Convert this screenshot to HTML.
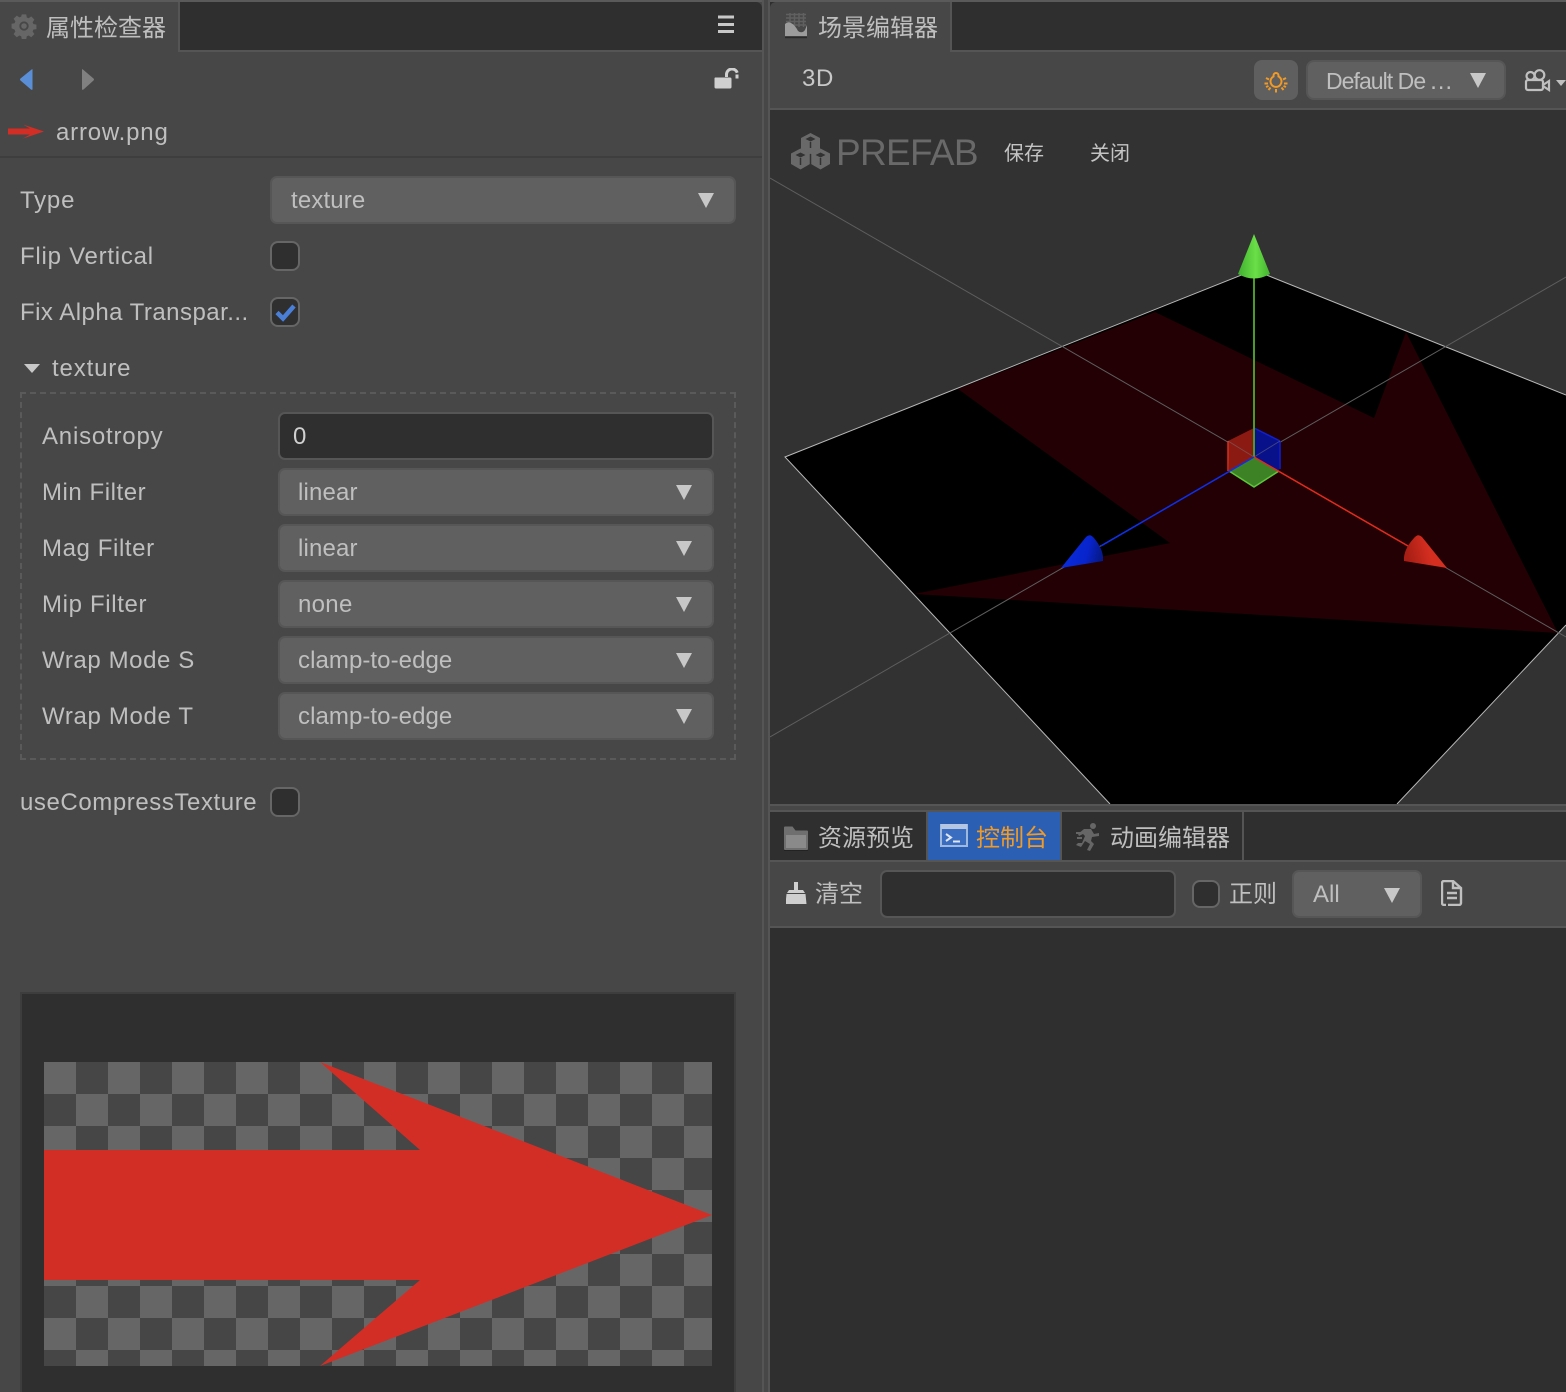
<!DOCTYPE html>
<html lang="zh">
<head>
<meta charset="utf-8">
<title>属性检查器</title>
<style>
html,body{margin:0;padding:0;background:#2f2f2f}
body{position:relative;width:1566px;height:1392px;overflow:hidden;font-family:"Liberation Sans","Noto Sans CJK SC",sans-serif;font-size:24px;color:#bfbfbf}
.r{position:absolute;box-sizing:border-box}
.t{position:absolute;white-space:nowrap;line-height:32px;height:32px;margin-top:1px}
.sel{position:absolute;box-sizing:border-box;background:#606060;border:2px solid #565656;border-radius:7px}
.inp{position:absolute;box-sizing:border-box;background:#2f2f2f;border:2px solid #565656;border-radius:7px}
.cb{position:absolute;box-sizing:border-box;width:30px;height:30px;background:#2f2f2f;border:2px solid #666;border-radius:8px}
.tri{position:absolute;width:0;height:0;border-left:8px solid transparent;border-right:8px solid transparent;border-top:15px solid #c8c8c8}
svg{position:absolute;overflow:hidden}
</style>
</head>
<body>
<!-- left panel -->
<div class="r" style="left:0;top:0;width:764px;height:1392px;background:#474747"></div>
<div class="r" style="left:0;top:0;width:1566px;height:2px;background:#5a5a5a"></div>
<div class="r" style="left:180px;top:2px;width:582px;height:48px;background:#2f2f2f;border-top-right-radius:6px"></div>
<div class="r" style="left:178px;top:2px;width:2px;height:50px;background:#555"></div>
<div class="r" style="left:178px;top:50px;width:584px;height:2px;background:#555"></div>
<div class="r" style="left:762px;top:0;width:2px;height:1392px;background:#555"></div>
<div class="r" style="left:764px;top:0;width:4px;height:1392px;background:#474747"></div>
<div class="r" style="left:0;top:156px;width:762px;height:2px;background:#3e3e3e"></div>

<svg style="left:11px;top:13px" width="26" height="26" viewBox="-1 -1 28 28"><path fill="#666" fill-rule="evenodd" d="M10.6 0.500h4.800l.6 3.300 2 .8 2.800-1.900 3.400 3.400-1.900 2.800.8 2 3.300.6v4.800l-3.300.6-.8 2 1.900 2.800-3.400 3.400-2.800-1.900-2 .8-.6 3.300h-4.800l-.6-3.300-2-.8-2.800 1.900-3.400-3.400 1.900-2.800-.8-2L-.4 15.400v-4.800l3.300-.6.8-2L1.800 5.200l3.400-3.400L8 3.700l2-.8zM13 8a5 5 0 1 0 0 10 5 5 0 0 0 0-10z"/><circle cx="13" cy="13" r="3" fill="#666"/></svg>
<div class="t" style="left:46px;top:12px">属性检查器</div>
<svg style="left:714px;top:14px" width="24" height="22"><path d="M4 3h16M4 10.500h16M4 17.500h16" stroke="#c8c8c8" stroke-width="3"/></svg>

<svg style="left:18px;top:68px" width="18" height="24"><path d="M14.500 1.500v19.500q0 1.500-1.500.5L2.500 12.500q-1-1 0-2L13 2q1.500-1.500 1.500-.5z" fill="#5a8fd8"/></svg>
<svg style="left:80px;top:68px" width="18" height="24"><path d="M2 1.500v19.500q0 1.500 1.500.5L13.500 12.500q1-1 0-2L3.500 2Q2 .5 2 1.500z" fill="#808080"/></svg>
<svg style="left:714px;top:68px" width="26" height="22"><path d="M1 9.500h15a1.500 1.500 0 0 1 1.500 1.500v8a1.500 1.500 0 0 1-1.500 1.500H2a1.500 1.500 0 0 1-1.500-1.500v-8A1.500 1.500 0 0 1 1 9.500z" fill="#cfcfcf"/><path d="M12.500 9V6.500a5.500 5.500 0 0 1 10.700-1.800" fill="none" stroke="#cfcfcf" stroke-width="3"/><path d="M21.500 6.500h3v4h-3z" fill="#cfcfcf"/></svg>

<svg style="left:8px;top:124px" width="36" height="16"><path d="M0 4.500h22L15 .5 36 7.500 15 14.500 22 10.500H0z" fill="#d32e26"/></svg>
<div class="t" style="left:56px;top:116px;letter-spacing:.8px">arrow.png</div>

<div class="t" style="left:20px;top:184px;letter-spacing:.8px">Type</div>
<div class="sel" style="left:270px;top:176px;width:466px;height:48px"></div>
<div class="t" style="left:291px;top:184px;letter-spacing:.15px">texture</div>
<div class="tri" style="left:698px;top:193px"></div>

<div class="t" style="left:20px;top:240px;letter-spacing:.75px">Flip Vertical</div>
<div class="cb" style="left:270px;top:241px"></div>
<div class="t" style="left:20px;top:296px;letter-spacing:.47px">Fix Alpha Transpar...</div>
<div class="cb" style="left:270px;top:297px"></div>
<svg style="left:270px;top:297px" width="30" height="30"><path d="M7 15.500l6 6L24 9" fill="none" stroke="#4a7fd8" stroke-width="4.500"/></svg>

<div class="tri" style="left:24px;top:364px;border-left-width:8px;border-right-width:8px;border-top-width:9px"></div>
<div class="t" style="left:52px;top:352px;letter-spacing:.85px">texture</div>

<div class="r" style="left:20px;top:392px;width:716px;height:368px;border:2px dashed #5a5a5a"></div>
<div class="t" style="left:42px;top:420px;letter-spacing:.8px">Anisotropy</div>
<div class="inp" style="left:278px;top:412px;width:436px;height:48px"></div>
<div class="t" style="left:293px;top:420px;color:#d0d0d0">0</div>

<div class="t" style="left:42px;top:476px;letter-spacing:.55px">Min Filter</div>
<div class="sel" style="left:278px;top:468px;width:436px;height:48px"></div>
<div class="t" style="left:298px;top:476px;letter-spacing:.15px">linear</div>
<div class="tri" style="left:676px;top:485px"></div>

<div class="t" style="left:42px;top:532px;letter-spacing:.6px">Mag Filter</div>
<div class="sel" style="left:278px;top:524px;width:436px;height:48px"></div>
<div class="t" style="left:298px;top:532px;letter-spacing:.15px">linear</div>
<div class="tri" style="left:676px;top:541px"></div>

<div class="t" style="left:42px;top:588px;letter-spacing:.65px">Mip Filter</div>
<div class="sel" style="left:278px;top:580px;width:436px;height:48px"></div>
<div class="t" style="left:298px;top:588px;letter-spacing:.3px">none</div>
<div class="tri" style="left:676px;top:597px"></div>

<div class="t" style="left:42px;top:644px;letter-spacing:.6px">Wrap Mode S</div>
<div class="sel" style="left:278px;top:636px;width:436px;height:48px"></div>
<div class="t" style="left:298px;top:644px;letter-spacing:.07px">clamp-to-edge</div>
<div class="tri" style="left:676px;top:653px"></div>

<div class="t" style="left:42px;top:700px;letter-spacing:.65px">Wrap Mode T</div>
<div class="sel" style="left:278px;top:692px;width:436px;height:48px"></div>
<div class="t" style="left:298px;top:700px;letter-spacing:.07px">clamp-to-edge</div>
<div class="tri" style="left:676px;top:709px"></div>

<div class="t" style="left:20px;top:786px;letter-spacing:.58px">useCompressTexture</div>
<div class="cb" style="left:270px;top:787px"></div>

<!-- preview -->
<div class="r" style="left:20px;top:992px;width:716px;height:400px;background:#2f2f2f;border:2px solid #3d3d3d;border-bottom:0"></div>
<div class="r" style="left:44px;top:1062px;width:668px;height:304px;background:conic-gradient(#464646 25%,#666 0 50%,#464646 0 75%,#666 0) 0 0/64px 64px"></div>
<svg style="left:0;top:0" width="764" height="1392"><polygon points="44,1150 420,1150 320,1062 712,1215 320,1366 420,1280 44,1280" fill="#d32e26"/></svg>

<!-- right panel -->
<div class="r" style="left:768px;top:0;width:2px;height:1392px;background:#555"></div>
<div class="r" style="left:770px;top:2px;width:180px;height:50px;background:#474747;border-top-left-radius:6px"></div>
<div class="r" style="left:950px;top:2px;width:2px;height:50px;background:#555"></div>
<div class="r" style="left:952px;top:50px;width:614px;height:2px;background:#555"></div>
<div class="r" style="left:770px;top:52px;width:796px;height:56px;background:#474747"></div>
<div class="r" style="left:770px;top:108px;width:796px;height:2px;background:#555"></div>

<svg style="left:785px;top:13px" width="22" height="26"><path d="M1 1.500h20M1 5h20M1 8.500h20M1 12h20" stroke="#606060" stroke-width="1.500"/><path d="M5 0v14M9.500 0v14M14 0v14M18.500 0v14" stroke="#606060" stroke-width="1.500"/><path d="M0 23V11Q3 8 6 10Q10 12 13 18Q17 21 20 17L22 12V23Z" fill="#9c9c9c"/><path d="M0 24.500h22" stroke="#2a2a2a" stroke-width="1.500"/></svg>
<div class="t" style="left:818px;top:12px">场景编辑器</div>
<div class="t" style="left:802px;top:62px;color:#c8c8c8;letter-spacing:.6px">3D</div>

<div class="r" style="left:1254px;top:60px;width:44px;height:40px;background:#5f5f5f;border-radius:8px"></div>
<svg style="left:1264px;top:70px" width="24" height="24" viewBox="0 0 24 24"><path d="M12 3a2.500 2.500 0 0 1 2.500 2.500 v1 a5.500 5.500 0 1 1-5 0v-1A2.500 2.500 0 0 1 12 3z" fill="none" stroke="#f09a27" stroke-width="2"/><path d="M12 19v3.500M6.500 17.500l-2 2.500M17.500 17.500l2 2.500M4 13.500H.5M20 13.500h3.500M5 9.500L2 8M19 9.500L22 8M4.500 16L2 17M19.500 16L22 17" stroke="#f09a27" stroke-width="2"/></svg>
<div class="sel" style="left:1306px;top:60px;width:200px;height:40px;border-radius:8px"></div>
<div class="t" style="left:1326px;top:64px;font-size:23px;letter-spacing:-.95px">Default De<span style="font-size:24px;letter-spacing:0;margin-left:4px">…</span></div>
<div class="tri" style="left:1470px;top:73px"></div>
<svg style="left:1524px;top:69px" width="42" height="24"><circle cx="6.500" cy="7" r="4" fill="none" stroke="#c0c0c0" stroke-width="2.200"/><circle cx="15.500" cy="6" r="4.800" fill="none" stroke="#c0c0c0" stroke-width="2.200"/><rect x="2" y="11" width="17" height="10" rx="2" fill="#474747" stroke="#c0c0c0" stroke-width="2.200"/><path d="M19 16l6-4v9l-6-4z" fill="none" stroke="#c0c0c0" stroke-width="2.200"/><path d="M32 11h10l-5 6z" fill="#c0c0c0"/></svg>

<!-- scene -->
<svg style="left:770px;top:110px" width="796" height="694" viewBox="770 110 796 694">
<defs>
<linearGradient id="g" x1="0" x2="1" y1="0" y2="0"><stop offset="0" stop-color="#3fb02f"/><stop offset=".55" stop-color="#6adf47"/><stop offset="1" stop-color="#42b52f"/></linearGradient>
<linearGradient id="b" x1="0" x2="1" y1="0" y2=".2"><stop offset="0" stop-color="#0a2fe0"/><stop offset=".7" stop-color="#0824cc"/><stop offset="1" stop-color="#061a90"/></linearGradient>
<linearGradient id="re" x1="0" x2="1" y1=".2" y2="0"><stop offset="0" stop-color="#a81e14"/><stop offset=".5" stop-color="#d32e20"/><stop offset="1" stop-color="#d43020"/></linearGradient>
</defs>
<rect x="770" y="110" width="796" height="694" fill="#323232"/>
<polygon points="785,457 1254,270 1566,395 1566,625 1397,804 1110,804" fill="#000"/>
<path d="M1110 804L785 457L1254 270L1566 395M1566 625L1397 804" fill="none" stroke="#b8b8b8" stroke-width="1"/>
<polygon points="958,389 1155,312 1374,418 1406,332 1558,633 914,594 1170,543" fill="#220003"/>
<path d="M770 178L1566 637M770 737L1566 277" stroke="#5e5e5e" stroke-width="1"/>
<polygon points="1254,428 1228,441 1229,471 1254,457" fill="#8a1a12"/>
<polygon points="1254,428 1280,441 1279,471 1254,457" fill="#08108a"/>
<polygon points="1254,457 1229,471 1254,487 1279,471" fill="#3e8226"/>
<path d="M1228 441V471" stroke="#d8301f" stroke-width="1.500"/>
<path d="M1280 441V469M1280 441L1254 428" stroke="#1020d0" stroke-width="1.500"/>
<path d="M1229 471L1254 487L1279 471" fill="none" stroke="#5cc83a" stroke-width="1.500"/>
<path d="M1228 441L1254 457M1280 441L1254 457" stroke="#777" stroke-opacity=".5"/>
<path d="M1254 457V276" stroke="#4a9a2c" stroke-width="2"/>
<path d="M1254 457L1101 546" stroke="#0c2ff0" stroke-width="1.500"/>
<path d="M1254 457L1408 546" stroke="#e22a1c" stroke-width="1.500"/>
<path d="M1254 234L1270 274Q1254 283 1238 274Z" fill="url(#g)"/>
<path d="M1061 568L1086 537Q1090 533 1094 538Q1104 550 1103 561Z" fill="url(#b)"/>
<path d="M1447 568L1422 537Q1418 533 1414 538Q1403 550 1404 561Z" fill="url(#re)"/>
</svg>
<svg style="left:790px;top:132px" width="42" height="40" viewBox="0 0 42 40"><g fill="#696969" fill-rule="evenodd"><path d="M20.500 1l9.500 5v11l-9.500 5-9.500-5V6zM20.500 4.500l-5 2.500 5 2.500 5-2.500z"/><path d="M10.500 16.500L20 21.500V32L10.500 37.500 1 32V21.500zM10.500 20.500l-5 2.500 5 2.500 5-2.500z"/><path d="M30.500 16.500L40 21.500V32L30.500 37.500 21 32V21.500zM30.500 20.500l-5 2.500 5 2.500 5-2.500z"/></g><path d="M20.500 10v6M10.500 26v7M30.500 26v7M20.500 22v15" stroke="#323232" stroke-width="1.500"/></svg>
<div class="t" style="left:836px;top:136px;font-size:37px;letter-spacing:-.7px;color:#696969">PREFAB</div>
<div class="t" style="left:1004px;top:137px;font-size:20px;color:#c4c4c4">保存</div>
<div class="t" style="left:1090px;top:137px;font-size:20px;color:#c4c4c4">关闭</div>

<!-- bottom panel -->
<div class="r" style="left:770px;top:804px;width:796px;height:2px;background:#555"></div>
<div class="r" style="left:770px;top:806px;width:796px;height:4px;background:#474747"></div>
<div class="r" style="left:770px;top:810px;width:796px;height:2px;background:#555"></div>
<div class="r" style="left:770px;top:860px;width:796px;height:2px;background:#555"></div>
<div class="r" style="left:770px;top:862px;width:796px;height:64px;background:#474747"></div>
<div class="r" style="left:770px;top:926px;width:796px;height:2px;background:#555"></div>
<div class="r" style="left:926px;top:812px;width:2px;height:48px;background:#555"></div>
<div class="r" style="left:928px;top:812px;width:132px;height:48px;background:#2b5fb3"></div>
<div class="r" style="left:1060px;top:812px;width:2px;height:48px;background:#555"></div>
<div class="r" style="left:1242px;top:812px;width:2px;height:48px;background:#555"></div>

<svg style="left:783px;top:825px" width="26" height="26"><path d="M1 2.500a1 1 0 0 1 1-1h7.500l3 4H24a1 1 0 0 1 1 1V24a1 1 0 0 1-1 1H2a1 1 0 0 1-1-1z" fill="#6f6f6f"/><path d="M3 10h20v13H3z" fill="#8a8a8a"/><path d="M1 25.500h24" stroke="#222" stroke-width="1"/></svg>
<div class="t" style="left:818px;top:822px">资源预览</div>
<svg style="left:940px;top:823px" width="28" height="26"><rect x="1" y="2" width="26" height="21" fill="#3a6cc0" stroke="#9fb8dd" stroke-width="2"/><rect x="1" y="1" width="26" height="5" fill="#b5c6e2"/><path d="M6 11l5 3.500-5 3.500" fill="none" stroke="#dfe6f2" stroke-width="2"/><path d="M13 18.500h7" stroke="#dfe6f2" stroke-width="2"/></svg>
<div class="t" style="left:976px;top:822px;color:#f09a27">控制台</div>
<svg style="left:1076px;top:823px" width="24" height="28"><g fill="#666"><circle cx="17" cy="3" r="3"/><path d="M8 6l7 0 3 5 5-1v3l-7 1-1 4 3 3-4 7-3-1 3-6-5-3-4 6-5-2 2-2 4 0 3-7-2-2-4 2-1-2z"/><path d="M0 9h6v2H0zM1 14h5v2H1z"/></g></svg>
<div class="t" style="left:1110px;top:822px">动画编辑器</div>

<svg style="left:786px;top:881px" width="22" height="26"><path d="M8 1h4v8h5l2 3H1l2-3h5zM.5 13h19l1 10H-.5z" fill="#cfcfcf"/></svg>
<div class="t" style="left:815px;top:878px">清空</div>
<div class="inp" style="left:880px;top:870px;width:296px;height:48px"></div>
<div class="cb" style="left:1192px;top:880px;width:28px;height:28px"></div>
<div class="t" style="left:1229px;top:878px">正则</div>
<div class="sel" style="left:1292px;top:870px;width:130px;height:48px"></div>
<div class="t" style="left:1313px;top:878px">All</div>
<div class="tri" style="left:1384px;top:888px"></div>
<svg style="left:1441px;top:880px" width="22" height="26"><path d="M5 25H3a2 2 0 0 1-2-2V3a2 2 0 0 1 2-2h9l8 7v15a2 2 0 0 1-2 2H7" fill="none" stroke="#c0c0c0" stroke-width="2.400"/><path d="M12 1v7h8M6 13h10M6 18h10" fill="none" stroke="#c0c0c0" stroke-width="2.400"/></svg>
</body>
</html>
